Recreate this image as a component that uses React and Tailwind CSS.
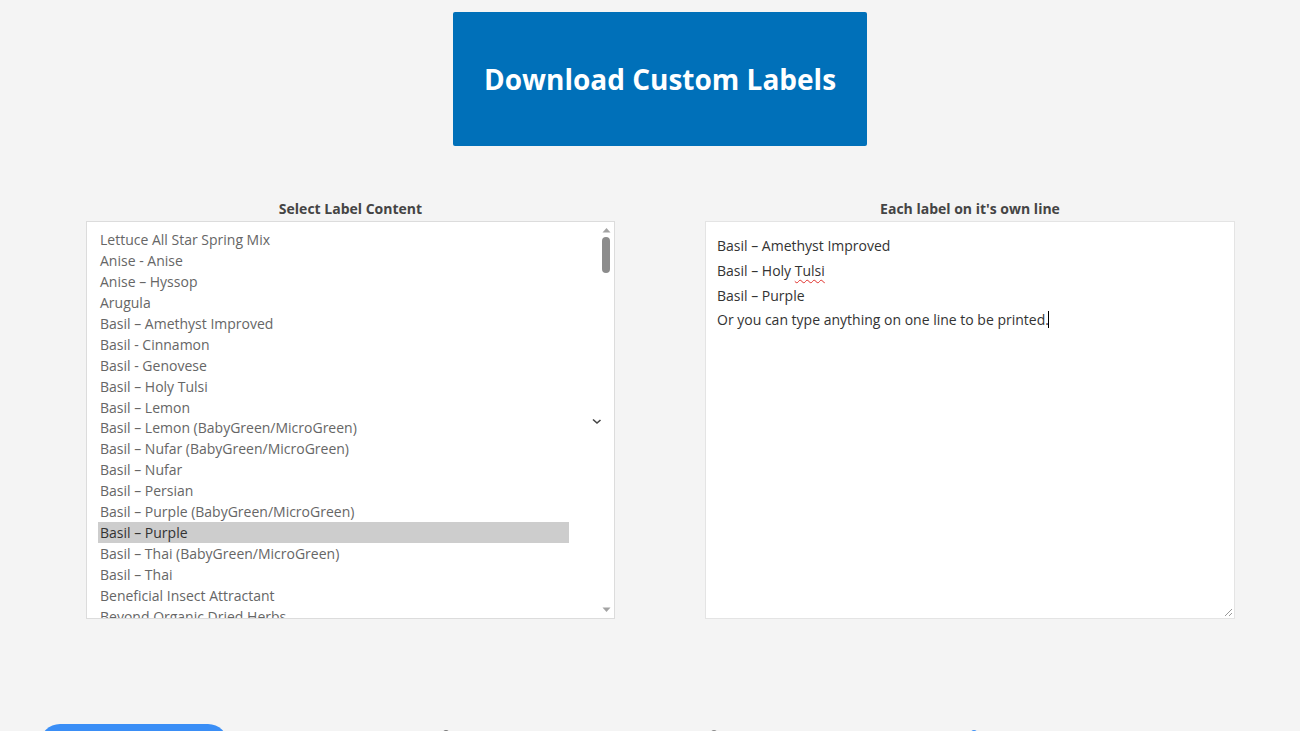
import React from "react";

const items = [
  "Lettuce All Star Spring Mix",
  "Anise - Anise",
  "Anise – Hyssop",
  "Arugula",
  "Basil – Amethyst Improved",
  "Basil - Cinnamon",
  "Basil - Genovese",
  "Basil – Holy Tulsi",
  "Basil – Lemon",
  "Basil – Lemon (BabyGreen/MicroGreen)",
  "Basil – Nufar (BabyGreen/MicroGreen)",
  "Basil – Nufar",
  "Basil – Persian",
  "Basil – Purple (BabyGreen/MicroGreen)",
  "Basil – Purple",
  "Basil – Thai (BabyGreen/MicroGreen)",
  "Basil – Thai",
  "Beneficial Insect Attractant",
  "Beyond Organic Dried Herbs",
];

function LabelList() {
  return (
    <div className="relative flex h-[398px] w-[529px] border border-[#dcdcdc] bg-white">
      <div className="flex-1 overflow-hidden pl-[11px] pr-[29px] pt-[7px]">
        {items.map((it) => (
          <div
            key={it}
            className={
              "h-[20.95px] pl-[2px] text-[14px] leading-[21px] whitespace-nowrap " +
              (it === "Basil – Purple" ? "bg-[#cdcdcd] text-[#333]" : "text-[#666]")
            }
          >
            {it}
          </div>
        ))}
      </div>
      <div className="flex w-[16px] flex-col items-center justify-between py-[5px]">
        <div className="flex flex-col items-center gap-[4px]">
          <svg width="9" height="6" viewBox="0 0 9 6">
            <path d="M0.5 5.5 L4.5 1 L8.5 5.5 Z" fill="#a3a3a3" />
          </svg>
          <div className="h-[36px] w-[8px] rounded-full bg-[#8c8c8c]" />
        </div>
        <svg width="9" height="6" viewBox="0 0 9 6">
          <path d="M0.5 0.5 L4.5 5 L8.5 0.5 Z" fill="#a3a3a3" />
        </svg>
      </div>
      <svg className="absolute left-[505px] top-[196px]" width="10" height="7" viewBox="0 0 10 7">
        <path d="M1 1.5 L5 5 L8.5 2" stroke="#444" strokeWidth="1.6" fill="none" />
      </svg>
    </div>
  );
}

function LabelText() {
  return (
    <div className="relative h-[398px] w-[530px] border border-[#e4e4e4] bg-white px-[11px] pt-[12px] text-[14px] leading-[24.8px] text-[#333]">
      <div>Basil – Amethyst Improved</div>
      <div>
        Basil – Holy{" "}
        <span className="underline decoration-wavy decoration-[#e0302b] decoration-1 underline-offset-[3px]">Tulsi</span>
      </div>
      <div>Basil – Purple</div>
      <div>
        Or you can type anything on one line to be printed.
        <span className="ml-[-1px] inline-block h-[17px] w-px translate-y-[3px] bg-black" />
      </div>
      <svg className="absolute bottom-[1px] right-[1px]" width="10" height="10" viewBox="0 0 10 10">
        <path d="M9 2 L2 9 M9 6 L6 9" stroke="#999" strokeWidth="1" />
      </svg>
    </div>
  );
}

export default function App() {
  return (
    <div className="min-h-screen bg-[#f4f4f4] font-['Open_Sans',sans-serif]">
      <div className="flex justify-center pl-[20px] pt-[12px]">
        <button className="flex h-[134px] w-[414px] items-center justify-center rounded-[2px] bg-[#0070b9] text-[28px] font-bold text-white">
          Download Custom Labels
        </button>
      </div>

      <div className="mt-[53px] flex gap-[90px] pl-[86px]">
        <div className="flex flex-col items-center">
          <div className="mb-[3px] text-[14px] font-bold leading-[19px] text-[#444]">Select Label Content</div>
          <LabelList />
        </div>
        <div className="flex flex-col items-center">
          <div className="mb-[3px] text-[14px] font-bold leading-[19px] text-[#444]">Each label on it's own line</div>
          <LabelText />
        </div>
      </div>

      <div className="mt-[105px] flex items-start pl-[40px]">
        <div className="h-[40px] w-[188px] rounded-full bg-[#3a8ef6]" />
        <div className="ml-[215px] mt-[6px] h-[10px] w-[6px] rounded-full bg-[#777]" />
        <div className="ml-[262px] mt-[6px] h-[10px] w-[6px] rounded-full bg-[#888]" />
        <div className="ml-[254px] mt-[6px] h-[10px] w-[6px] rounded-full bg-[#3a8ef6]" />
      </div>
    </div>
  );
}
